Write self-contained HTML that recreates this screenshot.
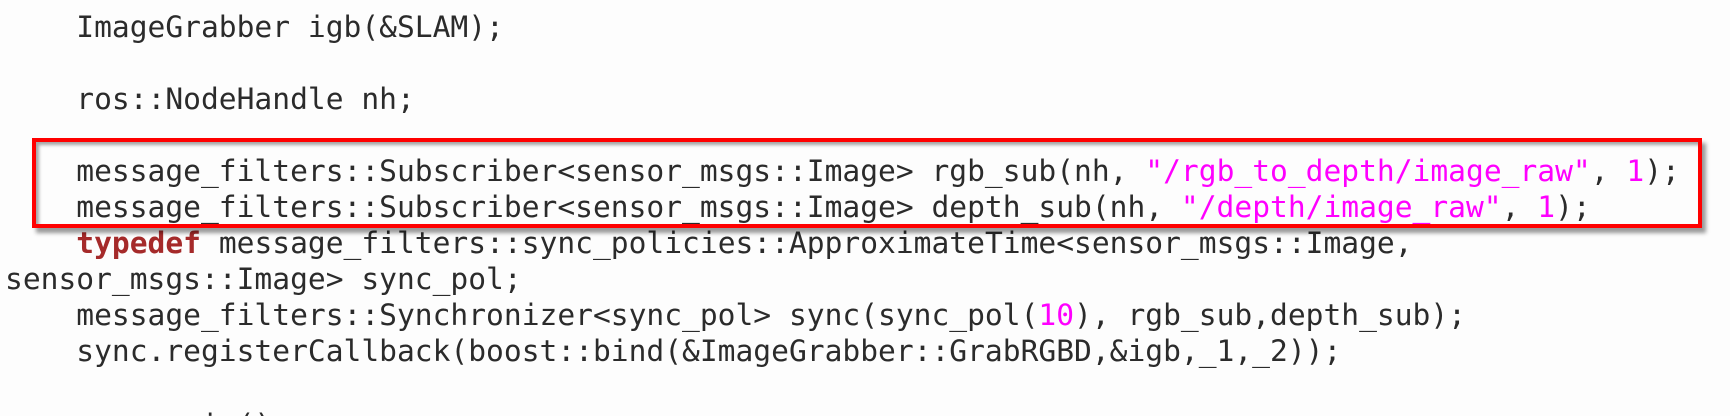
<!DOCTYPE html>
<html><head><meta charset="utf-8"><style>
html,body{margin:0;padding:0;background:#fdfdfd;width:1730px;height:416px;overflow:hidden}
#wrap{position:relative;width:1730px;height:416px;overflow:hidden;background:#fdfdfd}
pre{margin:0;position:absolute;left:5px;top:9px;font-family:"DejaVu Sans Mono","Liberation Mono",monospace;font-size:29.6px;line-height:36px;color:#2b2b2b}
.m{color:#ff00ff}.k{color:#a52a2a;font-weight:bold}
.last{position:relative;top:2px}
.box{position:absolute;left:32px;top:138px;width:1662px;height:82px;border:4px solid #ff0000;box-shadow:inset 3px 3px 3px rgba(0,0,0,0.35),4px 5px 4px rgba(0,0,0,0.4)}
</style></head><body><div id="wrap">
<pre>    ImageGrabber igb(&amp;SLAM);

    ros::NodeHandle nh;

    message_filters::Subscriber&lt;sensor_msgs::Image&gt; rgb_sub(nh, <span class="m">"/rgb_to_depth/image_raw"</span>, <span class="m">1</span>);
    message_filters::Subscriber&lt;sensor_msgs::Image&gt; depth_sub(nh, <span class="m">"/depth/image_raw"</span>, <span class="m">1</span>);
    <span class="k">typedef</span> message_filters::sync_policies::ApproximateTime&lt;sensor_msgs::Image,
sensor_msgs::Image&gt; sync_pol;
    message_filters::Synchronizer&lt;sync_pol&gt; sync(sync_pol(<span class="m">10</span>), rgb_sub,depth_sub);
    sync.registerCallback(boost::bind(&amp;ImageGrabber::GrabRGBD,&amp;igb,_1,_2));

<span class="last">    ros::spin();</span></pre>
<div class="box"></div>
</div></body></html>
